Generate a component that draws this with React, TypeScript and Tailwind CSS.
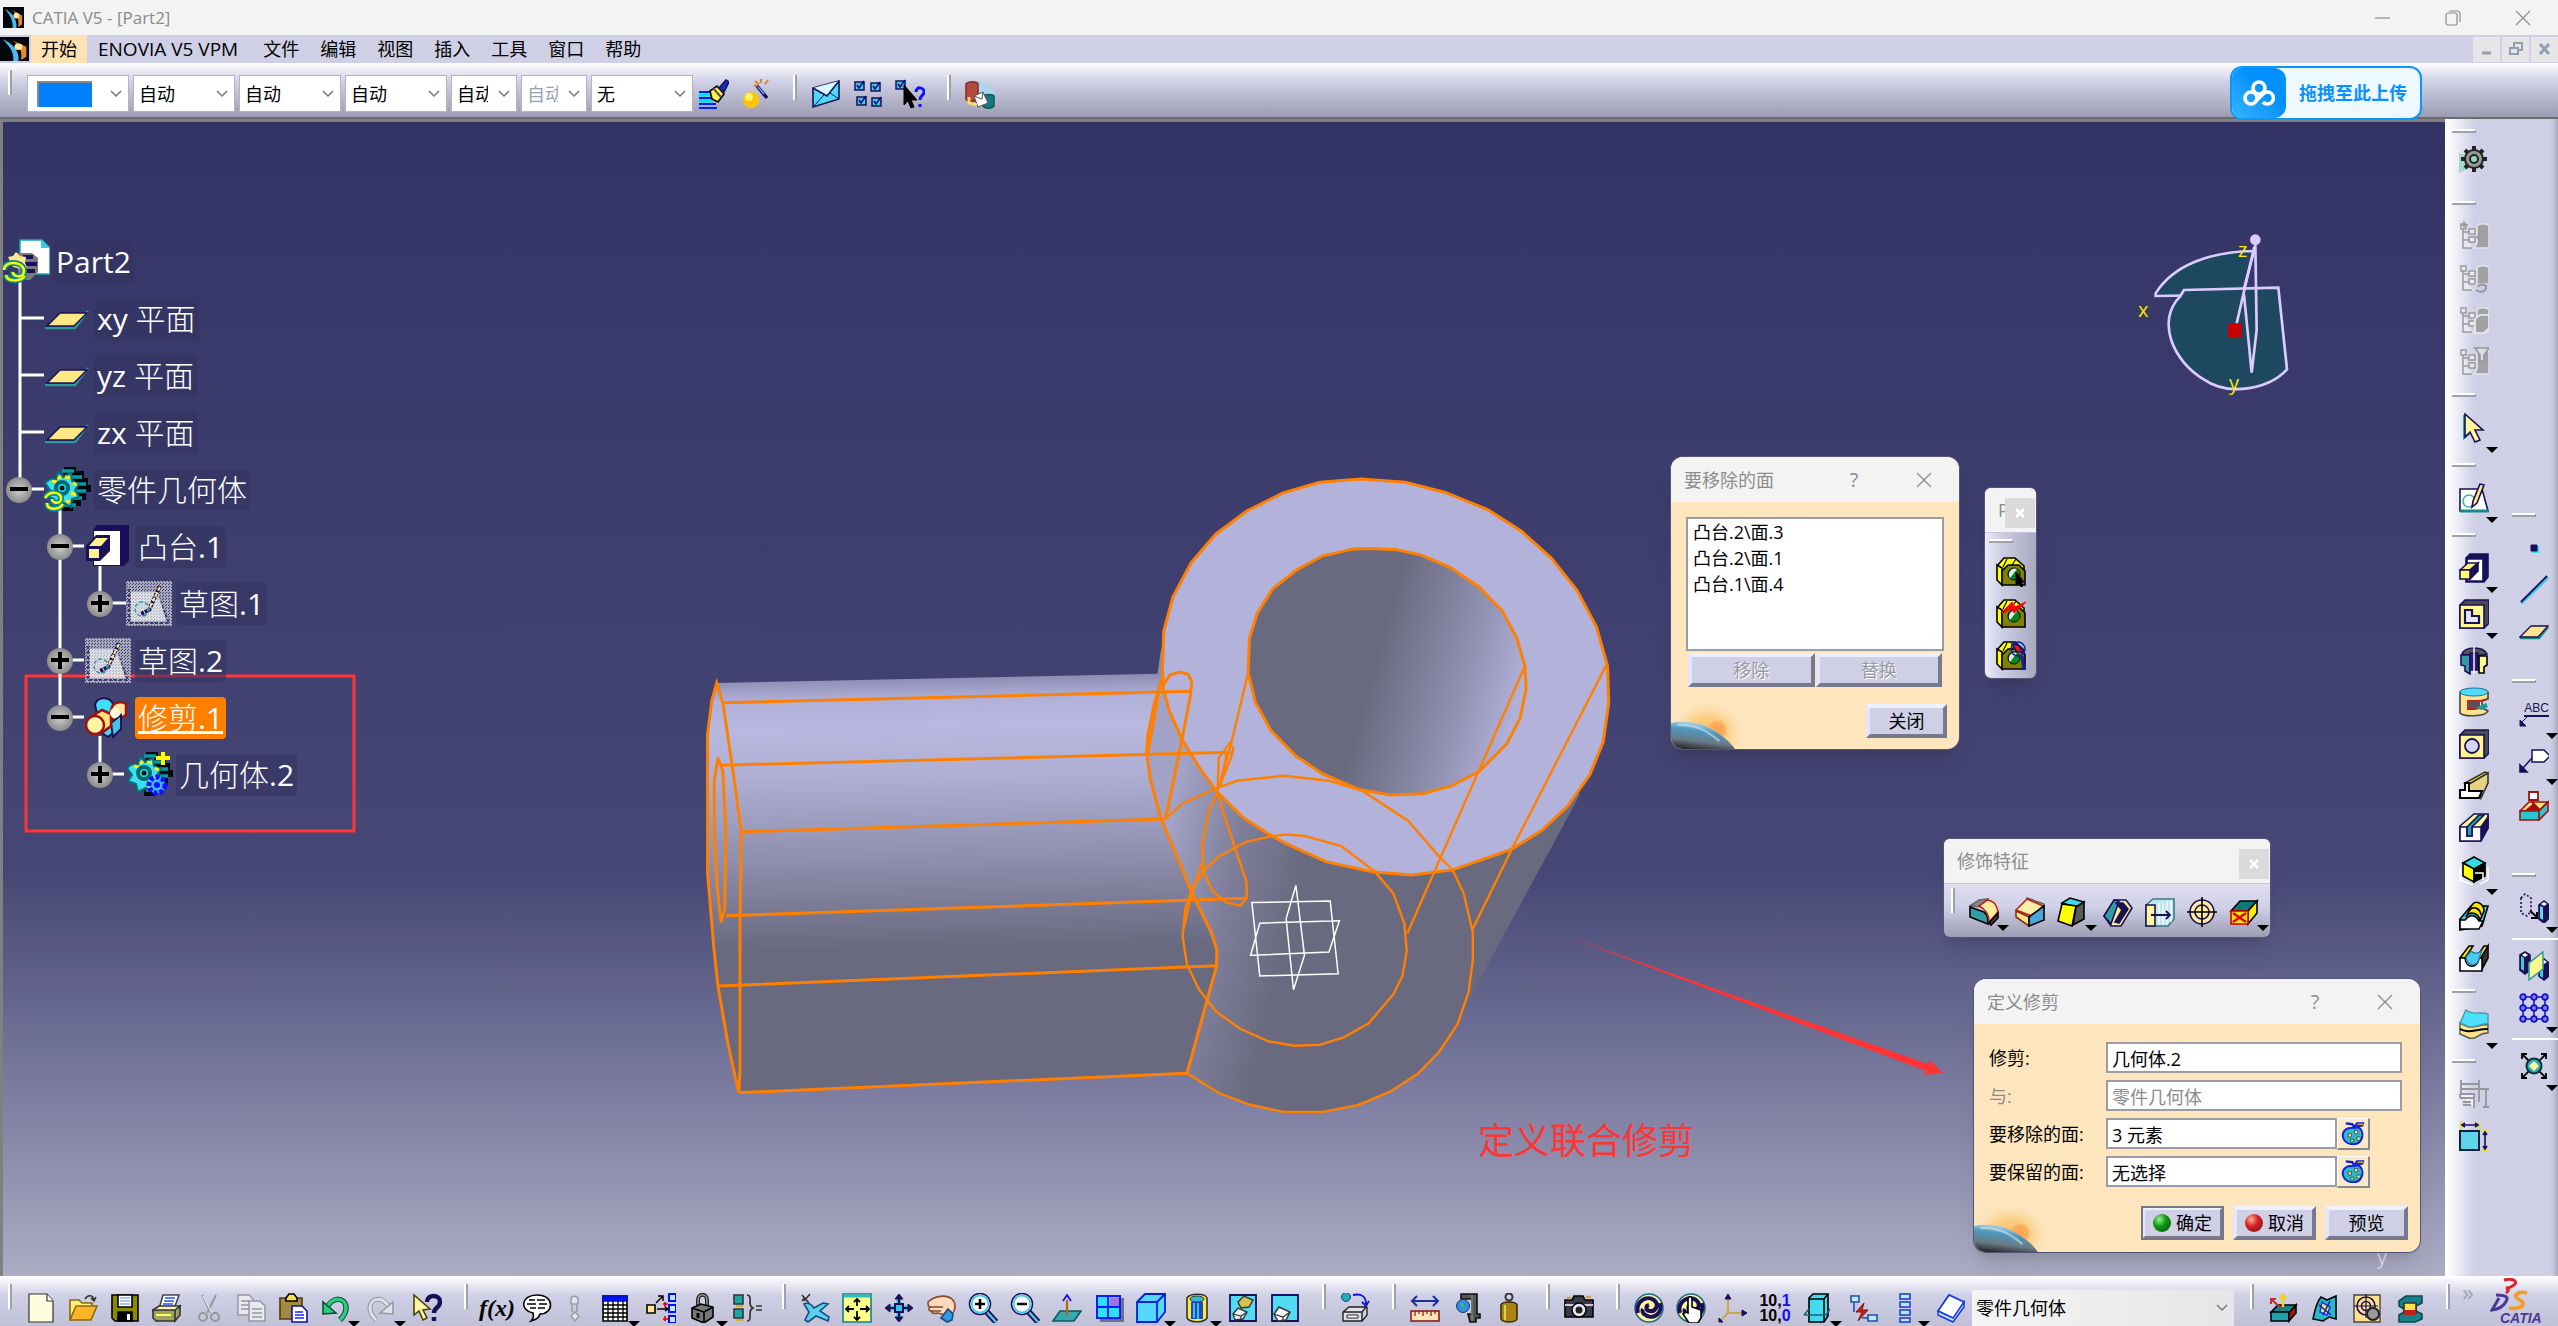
import * as React from "react";

const NAVY = "#1a1058";

function p(d: string, fill = "none", stroke = "#000", width = 1.6) {
  return <path d={d} fill={fill} stroke={stroke} strokeWidth={width} />;
}

const gear = (
  <>
    {p("M15 2v26M2 15h26M6 6l18 18M24 6L6 24", "none", "#222", 4)}
    <circle cx="15" cy="15" r="9" fill="#999" stroke="#222" strokeWidth="2" />
    <circle cx="15" cy="15" r="4" fill="#9bd3c4" stroke="#222" strokeWidth="2" />
  </>
);

const faceBlock = (
  <>
    {p("M1 9l7-8h11l9 8v4", "#ffff00")}
    {p("M7 10l4-8M16 8l4-6", "none", "#000", 1.2)}
    {p("M1 8v15l5 5V11z", "#ffff00")}
    {p("M6 28V14l6-6h11l6 6v14z", "#7f7f00")}
    <circle cx="18" cy="17" r="6" fill="#008a1c" stroke="#000" />
    {p("M14 21a6 6 0 0 1 7-9z", "#e6e6f5", "none")}
  </>
);

const disabledTree = (
  <>
    {p("M2 3h5v5H2zM10 8h6v5h-6zM10 16h6v5h-6zM4 8v19h9M4 11h6M4 19h6", "#e9e9f2", "#9a9a9e", 1.5)}
    {p("M18 5c2-3 10-3 12 0v22H15l3-5z", "#a2a2a6", "#e6e6ee", 1.5)}
  </>
);

const sheet = p("M3 1h18l6 7v21H3z", "#fffde0", "#333", 1.2);

const swirl = (
  <>
    <circle cx="15" cy="15" r="14" fill="#fff59a" stroke="#1d6f7c" strokeWidth="1.500" />
    {p("M4 20C1 8 13 2 20 7c6 5 1 12-4 11-4 0-5-5-1-6M26 10c3 11-8 18-16 11-1-1-2-3-1-5", "none", NAVY, 4)}
  </>
);

const magnifier = (
  <>
    {p("M18 18l10 11", "none", NAVY, 6)}
    {p("M18 18l10 11", "none", "#55c8e8", 2.5)}
    <circle cx="12" cy="11" r="10.500" fill="#fff" stroke={NAVY} strokeWidth="1.500" />
    <circle cx="12" cy="11" r="8.500" fill="#fff" stroke="#4ecbea" strokeWidth="2" />
  </>
);

const checks = (x: number, y: number) => (
  <>
    {p(`M${x} ${y}h9v8h-9z`, "#42c6e8", NAVY, 1.5)}
    {p(`M${x + 2} ${y + 3}l2 3 5-7`, "none", "#001070", 1.5)}
  </>
);

const icons: Record<string, React.ReactNode> = {
  brush: (
    <>
      {p("M0 13h13M0 19h15M0 25h17M0 29h18", "none", "#0020ff", 2)}
      {p("M0 16h12M0 22h14", "none", "#00e0f0", 3)}
      {p("M11 12l7-5 7 8-6 8-6-3z", "#ffec50")}
      {p("M14 9l8 9", "none", "#555", 2)}
      {p("M20 9l7-8 3 2-5 10z", "#1030c0", NAVY)}
    </>
  ),
  wand: (
    <>
      <circle cx="10" cy="21" r="8" fill="#ffc400" />
      <circle cx="8" cy="18" r="4" fill="#fff36b" />
      {p("M16 7l10 12", "none", NAVY, 3.5)}
      {p("M17 8l6 7", "none", "#70a0ff", 1.5)}
      {p("M14 2l4 3M20 0v4M27 1l-3 4M13 7l4-1", "none", "#e08030", 2)}
    </>
  ),
  envelope: (
    <>
      {p("M2 9l26-7v18L2 28z", "#4fd8f5", NAVY)}
      {p("M2 9l14 8L28 2", "#d8f8ff", NAVY)}
      {p("M2 28l11-12M28 20l-9-6", "none", NAVY, 1)}
    </>
  ),
  checkGrid: (
    <>
      {checks(2, 3)}
      {checks(18, 4)}
      {checks(4, 18)}
      {checks(19, 19)}
    </>
  ),
  whatSelect: (
    <>
      {checks(1, 2)}
      {p("M9 6v20l4-4 3 7 3-1-3-7h6z", "#000", "#000", 1)}
      {p("M21 13c0-6 8-5 8 0 0 4-4 3-4 8M25 25v3", "none", "#1010ff", 3)}
    </>
  ),
  database: (
    <>
      {p("M8 2c10-2 18 6 22 12v8L8 16z", "#abd6ef", "none")}
      {p("M1 5c2-3 11-3 12 0v15c-2 3-10 3-12 0z", "#b44a3c", "#8a3028")}
      {p("M18 17c2-2 10-2 11 0v10c-2 3-9 3-11 0z", "#127a80", "#0b5a60")}
      {p("M9 17l9-4 5 11-10 4z", "#fff", "#555", 1)}
      {p("M9 17l8 3 1-7", "none", "#555", 1)}
      {p("M4 18v6l8 2", "none", "#ffd76b", 3)}
    </>
  ),
  newFile: (
    <>
      {sheet}
      {p("M21 1v7h6", "#fff", "#333", 1.2)}
    </>
  ),
  open: (
    <>
      {p("M2 7h9l3 3h10v4H8L2 27z", "#fff07a", "#8a6a10")}
      {p("M2 27l6-14h21l-6 14z", "#ffb526", "#8a6a10")}
      {p("M17 6c3-5 8-4 9 1M23 5l3 3 2-4", "none", "#333")}
    </>
  ),
  save: (
    <>
      {p("M2 2h26v26H5l-3-3z", "#8a8a00")}
      {p("M8 2h14v12H8z", "#fff")}
      {p("M10 5h10M10 8h10M10 11h10", "none", "#5b8fe0", 1.2)}
      {p("M8 19h14v9H8z", "#000")}
      {p("M17 21h3v6h-3z", "#fff", "none")}
    </>
  ),
  print: (
    <>
      {p("M11 2h16l-5 14H7z", "#fff", "#444")}
      {p("M13 5h10M12 8h10M11 11h10", "none", "#2a50ff", 1.5)}
      {p("M1 17l6-4h21l-4 5H1z", "#f4f4c0", "#333")}
      {p("M1 17h22v11H4l-3-3zM23 17l5-4v9l-5 6z", "#9da35a", "#333")}
      {p("M4 22h15", "none", "#ffff60", 2)}
    </>
  ),
  cut: (
    <>
      {p("M8 2l9 18M22 2l-9 18", "none", "#96969c", 2)}
      {p("M9 3l9 17", "none", "#fff", 1)}
      <circle cx="9" cy="24" r="4" fill="none" stroke="#96969c" strokeWidth="2" />
      <circle cx="21" cy="24" r="4" fill="none" stroke="#96969c" strokeWidth="2" />
    </>
  ),
  copy: (
    <>
      {p("M2 2h11l4 4v16H2zM5 8h8M5 12h8M5 16h8", "#e9e9f2", "#96969c", 1.5)}
      {p("M13 8h11l5 5v15H13zM16 16h10M16 20h10M16 24h10", "#e9e9f2", "#96969c", 1.5)}
    </>
  ),
  paste: (
    <>
      {p("M2 5h22v21H2z", "#a08a40", "#4b3b10")}
      {p("M8 5l3-4h5l3 4v3H8z", "#ffe14a")}
      {p("M14 13h10l5 5v11H14z", "#fff", "#1010a0")}
      {p("M17 19h8M17 22h9M17 25h9", "none", "#2222ff", 1.5)}
    </>
  ),
  undo: (
    <>
      {p("M7 15C12 3 26 4 26 15c0 5-3 9-6 12", "none", "#0a4a4a", 5.5)}
      {p("M7 15C12 3 26 4 26 15c0 5-3 9-6 12", "none", "#28d07a", 3.5)}
      {p("M3 9v12l13-1z", "#28d07a", "#0a4a4a")}
    </>
  ),
  redo: (
    <>
      {p("M23 15C18 3 4 4 4 15c0 5 3 9 6 12", "none", "#9a9aa0", 5)}
      {p("M23 15C18 3 4 4 4 15c0 5 3 9 6 12", "none", "#dedeec", 3)}
      {p("M27 9v12l-13-1z", "#dedeec", "#9a9aa0")}
    </>
  ),
  help: (
    <>
      {p("M15 9c0-8 13-8 13 0 0 6-6 5-6 11M22 24v4", "none", NAVY, 4.5)}
      {p("M2 2v20l5-4 4 9 4-2-4-8 7-1z", "#fff6a0", "#4a4010")}
    </>
  ),
  bubble: (
    <>
      {p("M15 2c18 0 17 19 3 19-1 4-5 6-9 7 3-3 3-5 2-8C-3 17-1 2 15 2z", "#fff")}
      {p("M7 7h6M15 7h8M5 11h9M17 11h8M8 15h6M16 15h7", "none", "#000", 1.4)}
    </>
  ),
  chain: p("M11 11V7c0-5 7-5 7 0v4zM12 12v7M17 12v7M15 19l4 4-4 5-4-5z", "#e4e4f0", "#9c9ca4", 1.6),
  table: (
    <>
      {p("M3 3h24v25H3z", "#fff", "#000", 1.6)}
      {p("M3 3h24v5H3z", "#0010ff", "#0010c0")}
      {p("M3 12h24M3 16h24M3 20h24M3 24h24M8 8v20M13 8v20M18 8v20M23 8v20", "none", "#000", 1.3)}
    </>
  ),
  relations: (
    <>
      {p("M1 12h8v8H1z", "#ffe890")}
      {p("M23 1h7v7h-7zM23 12h7v7h-7zM23 23h7v7h-7z", "#bfe8ff", "#0010ff", 2)}
      {p("M11 16h10M10 10l7-7M19 14l3 2-3 2M17 8V3h-5", "none", "#000", 1.5)}
      {p("M17 11h5M19 9v5M17 26h5M19 23v5", "none", "#e00000", 1.6)}
    </>
  ),
  lock: (
    <>
      {p("M10 14V7c0-7 9-7 9 0v7", "none", "#222", 4)}
      {p("M10 14V7c0-7 9-7 9 0v7", "none", "#999", 1.5)}
      {p("M4 15l9-4 12 3v10l-9 6-12-5z", "#777")}
      {p("M4 15l12 4v11M16 19l9-5", "none", "#000")}
      {p("M10 20v5", "none", "#000", 3)}
    </>
  ),
  equation: (
    <>
      {p("M2 2h9v9H2zM2 16h9v9H2z", "#1ba5a0", "#333")}
      {p("M4 13h7M4 27h7", "none", "#d8b020", 2)}
      {p("M15 2c4 0 3 5 3 8s1 4 3 5c-2 1-3 2-3 5s1 8-3 8M24 13h6M24 17h6", "none", "#333", 1.7)}
    </>
  ),
  fly: (
    <>
      {p("M4 11c4-2 7 0 10 4l9-5 5 1-8 7 9 6-1 4-12-5-8 6-3-2 4-8z", "#56d2ef", "#1a4a80")}
      {p("M2 2l7 8M10 1L4 8M2 8l3-4", "none", "#333", 1.5)}
    </>
  ),
  fit: (
    <>
      {p("M1 1h28v28H1z", "#ffff8a", "#12808a")}
      {p("M1 3h28", "none", "#2ac0c0", 3)}
      {p("M15 7v6M15 18v8M5 16h7M18 16h8M12 9l3-3 3 3M12 24l3 3 3-3M7 13l-3 3 3 3M24 13l3 3-3 3", "none", "#000", 1.8)}
    </>
  ),
  pan: (
    <>
      {p("M15 4v22M4 15h22", "none", "#3ac0e0", 5)}
      {p("M15 2v26M2 15h26", "none", NAVY, 2)}
      {p("M11 6l4-5 4 5zM11 24l4 5 4-5zM6 11l-5 4 5 4zM24 11l5 4-5 4z", NAVY, NAVY, 1)}
      {p("M11 11h8v8h-8z", "#3ac0e0", NAVY, 2)}
    </>
  ),
  rotate: (
    <>
      {p("M2 9c6-6 18-8 24-3 5 5 3 12 0 15l-7 1-7-2c-4 1-7 0-6-2-4 0-4-3-1-4-3 0-3-2-3-5z", "#ffd9b8", "#8a4a30")}
      {p("M5 14h12M6 18h9", "none", "#8a4a30")}
      {p("M22 16l5 5-1 6-5 2-6-4z", "#2f9ce8", "#1a4a80")}
    </>
  ),
  zoomIn: (
    <>
      {magnifier}
      {p("M7 11h10M12 6v10", "none", "#000", 2.5)}
    </>
  ),
  zoomOut: (
    <>
      {magnifier}
      {p("M7 11h10", "none", "#000", 2.5)}
    </>
  ),
  normal: (
    <>
      {p("M1 28l7-10h21l-7 10z", "#35a8b0", "#0c5560")}
      {p("M15 22V7", "none", "#c06010", 2.2)}
      {p("M11 8l4-6 4 6", "none", "#1010e0", 1.8)}
    </>
  ),
  multiView: (
    <>
      {p("M6 5h24v24H6z", "#707088", "none")}
      {p("M3 3h23v22H3z", "#30e0ff", "#0020ff", 2)}
      {p("M14 3v22M3 14h23", "none", "#0020ff", 2)}
      {p("M16 5h9v8h-9z", "#a070e0", "none")}
    </>
  ),
  isoView: (
    <>
      {p("M1 9l8-8h20v18l-8 10H1z", "#55d8ff", "#0020e0", 1.8)}
      {p("M1 9h20l8-8M21 9v20", "none", "#0020e0", 1.8)}
    </>
  ),
  shading: (
    <>
      {p("M5 5c3-5 18-5 20 0v20c-3 5-17 5-20 0z", "#ffe93a", "#333")}
      {p("M9 9h12v17H9z", "#1a4ac0", "none")}
      {p("M12 10v15M16 10v16", "none", "#50e0f0", 1.5)}
      <ellipse cx="15" cy="6" rx="7" ry="3" fill="#30b8e0" stroke="#333" />
    </>
  ),
  hide: (
    <>
      {p("M2 2h26v26H2z", "#52dcf4", NAVY, 1.8)}
      {p("M10 9l6-6 9 4-4 7-8 1z", "#d8c050", "#333", 1.4)}
      {p("M5 21l5-6 9 4-4 7-8 1z", "#e8f0ff", "#333", 1.4)}
      {p("M5 21l8 2 6-4M13 23v3", "none", "#333", 1.2)}
    </>
  ),
  swap: (
    <>
      {p("M2 2h26v26H2z", "#52dcf4", NAVY, 1.8)}
      {p("M4 21l5-7 11 5-4 8-8 1z", "#f4f8ff", "#333", 1.4)}
      {p("M4 21l9 3 7-5M13 24v4", "none", "#333", 1.2)}
    </>
  ),
  material: (
    <>
      <circle cx="6" cy="4" r="4.500" fill="#28a8b8" stroke="#0c5560" />
      {p("M13 2c9-2 13 2 13 9M22 9l4 4 3-5", "none", "#1010e0", 1.8)}
      {p("M3 19l6-5h17l-4 5v9H3zM3 19h19M22 28l5-6v-8", "#e0e0ea", "#222", 1.4)}
      {p("M7 22h11v3H7z", "#fff", "#222", 1)}
    </>
  ),
  measure: (
    <>
      {p("M3 8h24M7 3L2 8l5 5M23 3l5 5-5 5", "none", "#1c2f9a", 2)}
      {p("M1 18h28v10H1z", "#ffe6b8", "#8a1010", 1.5)}
      {p("M5 18v5M9 18v3M13 18v5M17 18v3M21 18v5M25 18v3", "none", "#8a1010", 1.2)}
    </>
  ),
  caliper: (
    <>
      {p("M9 1h16v20h3v4h-4v4h-6l-2-8h4V6H9z", "#555", "#111")}
      {p("M20 2v26", "none", "#888", 1.5)}
      <circle cx="11" cy="13" r="6.500" fill="#3090e0" stroke="#1a3a70" />
      {p("M8 10l4 1-1 5z", "#40c060", "none")}
    </>
  ),
  weight: (
    <>
      <circle cx="15" cy="4" r="3.500" fill="none" stroke="#333" strokeWidth="2" />
      {p("M7 12c1-4 15-4 16 0v14c-2 4-14 4-16 0z", "#a88414", "#3a2c00")}
      {p("M11 12v15", "none", "#e8cc50", 2)}
    </>
  ),
  camera: (
    <>
      {p("M1 7h7l2-4h9l2 4h8v17H1z", "#3a3a4a")}
      {p("M1 12h28", "none", "#c8c8d8", 2)}
      {p("M3 5h4M22 4h5", "none", "#caa830", 2.5)}
      <circle cx="15" cy="17" r="7" fill="#e8e8f0" stroke="#000" strokeWidth="1.500" />
      <circle cx="15" cy="17" r="3.500" fill="#222" />
    </>
  ),
  update: swirl,
  manualUpdate: (
    <>
      {swirl}
      {p("M12 20V6c0-3 4-3 4 0v8l9 3v8l-3 5h-9l-6-9 3-2z", "#fff")}
    </>
  ),
  axis: (
    <>
      {p("M10 3v17h17M10 20L2 28", "none", "#c8a84a", 2.2)}
      {p("M7 6l3-5 3 5zM24 17l5 3-5 3zM1 25v4h4z", NAVY, NAVY, 1)}
    </>
  ),
  catalog: (
    <>
      {p("M7 5l4-4h15v22l-4 6H7z", "#40dcf0")}
      {p("M7 6h15l4-5M22 6v23", "none", "#000")}
      {p("M2 22l5-6M2 22h22l4-6", "none", "#186070", 1.5)}
    </>
  ),
  flash: (
    <>
      {p("M3 3h8v6H3zM20 22h9v6h-9z", "#bfeaf5", "#2050a8", 1.6)}
      {p("M6 9v10M14 25h6", "none", "#2050a8", 1.6)}
      {p("M16 10l-8 9h6l-4 9 10-11h-6z", "#d02020", "#801010", 1)}
    </>
  ),
  bodies: p("M10 1h10v5H10zM10 9h10v5H10zM10 17h10v5H10zM10 25h10v4H10z", "#b8e8f8", "#1838c8", 1.5),
  book: (
    <>
      {p("M2 18L13 2l15 7-10 17z", "#fff", "#1838e8", 1.8)}
      {p("M2 18v4l15 7 11-15V9L17 25zM2 18l15 7", "#bfe0ff", "#1838e8", 1.5)}
    </>
  ),
  extrudeAxis: (
    <>
      {p("M3 19l7-7h18l-7 8z", "#178088")}
      {p("M3 19h18v9H3z", "#20a0a8")}
      {p("M21 20l7-8v8l-7 8z", "#a01818")}
      {p("M15 14V3M12 6l3-4 3 4", "none", "#f0d020", 2.4)}
      {p("M13 15L4 7M3 11V6h5", "none", "#c03030", 2)}
    </>
  ),
  draftAnalysis: (
    <>
      {p("M3 26c2-9 3-16 8-22l6 3 9-4v23l-7-2-6 4z", "#28b8c8")}
      {p("M12 9l8 5-3 8-7-3z", "#ffe840", "#1838e8")}
      {p("M9 12l12 10M20 8l-7 14", "none", "#1020d0", 1.6)}
    </>
  ),
  tap: (
    <>
      {p("M2 2h26v27H2z", "#ffe08a", "#444", 1.4)}
      <circle cx="14" cy="13" r="9" fill="none" stroke={NAVY} strokeWidth="1.600" />
      <circle cx="14" cy="13" r="4.500" fill="none" stroke={NAVY} strokeWidth="1.600" />
      {p("M14 1v24M2 13h24", "none", NAVY, 1.2)}
      <circle cx="21" cy="21" r="6" fill="#999" stroke="#222" strokeWidth="2" />
    </>
  ),
  section: (
    <>
      {p("M5 8l7-5h16v7l-6 3v5l6 3v5l-7 3H5v-7l5-3v-3l-5-3z", "#178088", "#0b4a50")}
      {p("M10 10h12v10H10z", "#ffe640", "#333")}
      {p("M10 17h12v5H10z", "#c02020", "none")}
    </>
  ),
  workbench: (
    <>
      {p("M0 9v20l29-14z", "#a5d8c8", "none")}
      {gear}
    </>
  ),
  treeDown: (
    <>
      {disabledTree}
      {p("M5 0v8M1 4h8M22 12l-4 4 4 4", "none", "#96969c", 1.5)}
    </>
  ),
  treeRefresh: (
    <>
      {disabledTree}
      {p("M16 20h14v9H16z", "#cfcfe6", "none")}
      {p("M19 24c2-4 8-3 8 1M27 22v4M17 27c4 3 8 2 10-1", "none", "#96969c", 2)}
    </>
  ),
  treeBox: (
    <>
      {disabledTree}
      {p("M16 14l5-4h9v13l-5 5h-9z", "#a2a2a6", "#f0f0f6")}
    </>
  ),
  treeFilter: (
    <>
      {disabledTree}
      {p("M16 1h14l-5 7v6h-4V8z", "#dedeea", "#96969c")}
    </>
  ),
  select: (
    <>
      {p("M6 2v21l4-3", "none", "#28a8b0", 4)}
      {p("M6 1v23l5-5 5 10 5-2-5-10h8z", "#fff79a", NAVY)}
    </>
  ),
  sketcher: (
    <>
      {p("M1 6h22l6 22H1z", "#fff", NAVY)}
      {p("M1 28h29", "none", "#188890", 3)}
      <circle cx="10" cy="18" r="6" fill="none" stroke="#38b8a8" strokeWidth="1.600" />
      {p("M21 1l4 1-7 18-5 4 1-6z", "#ffe97a", NAVY)}
    </>
  ),
  pad: (
    <>
      {p("M7 5l4-4h18v23l-4 5H7z", NAVY, NAVY)}
      {p("M8 6h16v22H8z", "#fff", NAVY)}
      {p("M1 17l8-7h10l-8 7z", "#fff07a", NAVY)}
      {p("M11 17l8-7v8l-8 8z", NAVY, NAVY)}
      {p("M1 17h10v9H1z", "#ffff6a", NAVY)}
    </>
  ),
  pocket: (
    <>
      {p("M1 6l5-5h24v23l-5 5H1z", "#4a4a52", NAVY)}
      {p("M1 6h24v23H1z", "#fff792", NAVY)}
      {p("M6 11h7v6h7v7H6z", "#e6e6ff", NAVY, 2.2)}
    </>
  ),
  shaft: (
    <>
      {p("M3 9c3-8 21-8 25 0l-9 2h-8z", "#555", NAVY)}
      {p("M2 10h9v19l-5-3v-5l-4-1z", "#359aa4", NAVY)}
      {p("M11 8h8v17h-8z", "#2a1a7a", NAVY)}
      {p("M20 11h8v9l-3 2v6h-5z", "#fff792", "#000")}
      {p("M15 1v28", "none", "#fff", 1.4)}
    </>
  ),
  groove: (
    <>
      {p("M1 5c3-4 24-4 28 0v7l-6 2v7l6 3c-3 6-25 6-28 2z", "#ffe28a", "#444")}
      <ellipse cx="15" cy="5" rx="14" ry="4" fill="#50dcf8" stroke="#1878a0" />
      {p("M28 12l-7 2H9v8h7l12-3", "none", "#b02020", 1.8)}
      {p("M10 14h11v7H10z", "#555", "none")}
      {p("M17 21l10-5 2 4-7 3z", "#1898a0", "none")}
    </>
  ),
  hole: (
    <>
      {p("M1 6l5-5h24v23l-5 5H1z", "#4a4a52", NAVY)}
      {p("M1 6h24v23H1z", "#fff792", NAVY)}
      <circle cx="13" cy="17" r="7" fill="#d6d6f2" stroke={NAVY} strokeWidth="1.800" />
    </>
  ),
  rib: (
    <>
      {p("M10 13L29 2v10L22 27l-1-6H10z", "#e6d27e", "#333")}
      {p("M6 12L26 1l3 1L10 13z", "#fff200", "#333")}
      {p("M1 19h5v-7h4v8h13l-3 7H1z", "#fff", "#000", 2)}
    </>
  ),
  slotCut: (
    <>
      {p("M1 13L15 1h14v14l-8 13H1z", "#fff79a", NAVY)}
      {p("M22 14l7-10v11l-7 13z", NAVY, NAVY)}
      {p("M1 14h7v9h5v-9h9v14H1z", "#fff", NAVY)}
      {p("M8 14L20 2h5L13 14v9H8z", "#28a0a8", NAVY)}
    </>
  ),
  solidCombine: (
    <>
      {p("M4 8l11-6 11 6-11 6z", "#30dce8")}
      {p("M4 8v13l11 6V14z", "#ffff00")}
      {p("M15 14l11-6v13l-11 6z", "#000")}
      {p("M1 12v13l13 5M29 12v13l-8 4M16 18h8v7", "none", "#fff", 1.5)}
    </>
  ),
  loft: (
    <>
      {p("M1 18L12 5h17l-6 20-22 4z", "#3cc8e8")}
      {p("M7 16L13 4c4-6 12-1 12 6l-4 9c-2-8-11-9-14-3z", "#ffe600")}
      {p("M10 10c4-6 11-3 12 4", "none", "#000")}
      {p("M1 19h5c5-6 10-6 14 1h4l-4 8H1z", "#fff")}
    </>
  ),
  removedLoft: (
    <>
      {p("M1 15L10 3h4l-8 12zM17 15l8-12h4l-7 12z", "#ffe600")}
      {p("M22 15l7-12v12l-7 13z", "#333")}
      {p("M1 15h5c1 11 13 11 14 0h3v13H1z", "#fff")}
      {p("M7 14l5-6c3 3 8 3 11-1l-3 9c-2 8-12 8-13-2z", "#4cc8ec", "#1878a0", 1.2)}
    </>
  ),
  surface: (
    <>
      {p("M1 14l6 3c8 4 14-3 22-1v8c-9-1-12 8-19 5L1 25z", "#ffe48a", "#555", 1.4)}
      {p("M1 20c9 5 16 0 28 0", "none", "#000", 2)}
      {p("M1 14L7 1c8 6 14 1 22 4v10c-8-2-13 6-21 2z", "#4ce0fb", "#4a98a8", 1.4)}
    </>
  ),
  dimTable: (
    <>
      {p("M2 1v13M20 1v22M2 5h18M2 10h28M24 28h6M27 10v18", "none", "#96969c", 1.8)}
      {p("M1 15h14v14M1 19h14M4 23h8M4 26h8M1 15v4", "#f0f0f8", "#96969c", 1.8)}
    </>
  ),
  dimBox: (
    <>
      {p("M2 0v9M20 0v9M22 10h8M22 29h8", "none", "#e8d860", 2.4)}
      {p("M3 4h16M26 11v17M6 2L3 4l3 2M16 2l3 2-3 2M24 14l2-3 2 3M24 25l2 3 2-3", "none", NAVY, 1.6)}
      {p("M1 10h19v19H1z", "#5ed4e8", "#0c2040", 2)}
    </>
  ),
  point: (
    <>
      {p("M13 13h7v7h-7z", "#38d8f8", "none")}
      {p("M12 12h6v6h-6z", NAVY, NAVY, 1)}
    </>
  ),
  line: (
    <>
      {p("M2 28L29 2", "none", "#38c8f0", 3.6)}
      {p("M2 27L28 1", "none", NAVY, 1.8)}
    </>
  ),
  plane: (
    <>
      {p("M1 21h19l9-11", "none", "#188890", 2.6)}
      {p("M1 20L12 9h17l-10 11z", "#ffe48a", NAVY, 1.3)}
    </>
  ),
  flagNote: (
    <>
      {p("M13 5h12l6 6-6 6H13z", "#fff", NAVY, 1.5)}
      {p("M13 13L4 23", "none", NAVY, 1.5)}
      {p("M1 27v-7l7 7z", NAVY, NAVY)}
    </>
  ),
  stamp: (
    <>
      {p("M1 20l9-9h19l-9 9z", "#ffe070", "#a01010")}
      {p("M1 20h19v9H1zM20 20l9-9v9l-9 9z", "#28c8d0", "#a01010")}
      {p("M14 9v7M9 18h11l-5-5z", "#a01010", "#a01010", 1.8)}
      {p("M10 1h9v8h-9z", "#fff", "#a01010", 1.8)}
    </>
  ),
  translate: (
    <>
      <path d="M2 5l4-4 6 4v13l-4 5-6-3z" fill="none" stroke={NAVY} strokeWidth="1.600" strokeDasharray="2 2" />
      {p("M11 18l7 6M18 19v6h-6", "none", "#000", 2)}
      {p("M20 12l5-4 5 4v13l-5 5-5-4z", NAVY, NAVY)}
      {p("M21 13l3 1v13l-3-2z", "#60d8f0", "none")}
      {p("M22 11l3-2 3 2-3 2z", "#fff", "none")}
    </>
  ),
  mirror: (
    <>
      {p("M1 4l5-3 5 3v15l-5 4-5-4zM20 12l5-4 5 4v13l-5 4-5-4z", NAVY, NAVY)}
      {p("M2 5l3 2v13l-3-2zM21 13l3 2v12l-3-2z", "#40c8e0", "none")}
      {p("M3 4l3-2 3 2-3 2zM22 11l3-2 3 2-3 2z", "#fff", "none")}
      {p("M10 12L24 1v17L10 29z", "#fff792", "#38a098")}
    </>
  ),
  pattern: (
    <>
      {p("M3 4h24M3 15h24M3 26h24M4 3v24M15 3v24M26 3v24", "none", "#1010c8", 1.5)}
      {[4, 15, 26].map((x) =>
        [4, 15, 26].map((y) => (
          <circle key={`${x}-${y}`} cx={x} cy={y} r="2.800" fill="#8080ff" stroke="#1010c8" strokeWidth="1.800" />
        )),
      )}
    </>
  ),
  scale: (
    <>
      {p("M4 4l22 22M26 4L4 26M3 8V3h5M22 3h5v5M3 22v5h5M22 27h5v-5", "none", "#000", 1.8)}
      <circle cx="15" cy="15" r="7.500" fill="#28b0b8" stroke="#0c3038" strokeWidth="2" />
      {p("M15 10l5 5-5 5-5-5z", "#fff79a", "none")}
    </>
  ),
  faceSelect: (
    <>
      {faceBlock}
      {p("M20 15v13l3-2 2 4 2-1-2-4h3z", "#000", "#000", 1)}
    </>
  ),
  faceFlash: (
    <>
      {faceBlock}
      {p("M6 14L16 3l3 5L30 3 18 14l-2-4z", "#ff0000", "#ff0000", 1)}
    </>
  ),
  faceFind: (
    <>
      {faceBlock}
      {p("M16 3l6 1 6 8-8-2z", "#ff1010", "#101080")}
      <circle cx="22" cy="8" r="7" fill="none" stroke="#1020a0" strokeWidth="1.500" />
      {p("M26 15l2 14", "none", "#1020a0", 3)}
    </>
  ),
  fillet: (
    <>
      {p("M1 9l9-6 9-1-5 8z", "#8a8a8a", "#666")}
      {p("M1 10l14 5c4 3 4 7 4 12L1 20z", "#2f9ea6")}
      {p("M10 9l8-6c8 1 10 6 11 12l-9 10c0-7-2-12-10-16z", "#ffec9a", "#c02020")}
      {p("M20 26l9-10v5l-7 7z", "#444")}
    </>
  ),
  chamfer: (
    <>
      {p("M12 1l17 6v4L12 4z", "#999", "#666")}
      {p("M1 13L12 2l16 7-11 10z", "#fff0a8", "#c02020")}
      {p("M1 14l13 6v9L1 20z", "#ffe28a", "#8a3010")}
      {p("M14 29V20L29 9v14z", "#4ba6da")}
    </>
  ),
  draft: (
    <>
      {p("M5 6l8-5 14 4-8 5z", "#40d8ee")}
      {p("M5 7l14 2-4 20-14-5z", "#ffff00")}
      {p("M19 10l8-5v17l-11 6z", "#5a5a5a")}
    </>
  ),
  shell: (
    <>
      {p("M1 19L12 3h11l6 8-11 18H8z", "#ffe897", NAVY)}
      {p("M1 19L11 3l5 1-8 23z", "#2f9ea6", NAVY)}
      {p("M13 6h7l5 6-9 14-4-1 7-12z", NAVY, NAVY)}
    </>
  ),
  thickness: (
    <>
      {p("M1 8l7-6h21v20l-6 7H1z", "#bfe6ee", "#3a7a8a")}
      {p("M1 8h9v21H1z", "#fff7a0", NAVY)}
      {p("M14 6v22M18 6v22M26 3v22M22 4v23", "none", "#fff", 1.3)}
      {p("M6 18h19M21 14l4 4-4 4", "none", NAVY, 1.8)}
    </>
  ),
  target: (
    <>
      <circle cx="15" cy="15" r="12" fill="#ffeaa0" stroke={NAVY} strokeWidth="1.600" />
      <circle cx="15" cy="15" r="7" fill="none" stroke={NAVY} strokeWidth="1.600" />
      {p("M15 0v30M0 15h30", "none", "#000", 1.6)}
    </>
  ),
  removeFace: (
    <>
      {p("M2 14l9-10h17l-9 10z", "#0c7a78")}
      {p("M19 14l9-10v12l-9 11z", "#ffee00")}
      {p("M2 14h17v13H2z", "#ffe400", "#c00")}
      {p("M4 16l13 9M17 16L4 25", "none", "#e80000", 2.4)}
    </>
  ),
  bag: (
    <>
      {p("M9 9c-11 5-8 19 5 20S31 14 22 8z", "#2fb8c8", "#1020e0", 2.4)}
      {p("M6 3l8 1 3 4 3-5h9M20 7l8-2", "none", "#1020e0", 3)}
      {p("M21 4h7", "none", "#e0a020", 2)}
      {p("M9 16h4v4H9zM17 12h4v4h-4zM20 20h4v4h-4zM12 23h4v3h-4z", "#fff3b0", "#333", 1)}
    </>
  ),
};

function Icon({ name, className = "size-[30px]" }: { name: string; className?: string }) {
  return (
    <svg viewBox="0 0 30 30" className={className} aria-hidden="true">
      {icons[name]}
    </svg>
  );
}

function TextIcon({ name }: { name: string }) {
  if (name === "fx") return <span className="font-['Liberation_Serif',serif] text-2xl leading-[30px] font-bold italic">f(x)</span>;
  if (name === "decimals")
    return (
      <span className="flex flex-col font-['Liberation_Sans',sans-serif] text-base leading-[15px] font-bold">
        <span>
          10,<span className="text-[#1010ff]">1</span>
        </span>
        <span>
          10,<span className="text-[#1010ff]">0</span>
        </span>
      </span>
    );
  return (
    <span className="flex flex-col items-end font-['Liberation_Sans',sans-serif] text-xs leading-[13px] text-[#1a1058]">
      <span className="border-b-2 border-[#1a1058]">ABC</span>
      <svg viewBox="0 0 30 10" className="h-[10px] w-[30px]" aria-hidden="true">
        <path d="M8 0L3 5M1 3v6h6z" fill="#1a1058" stroke="#1a1058" />
      </svg>
    </span>
  );
}

const textIcons = ["fx", "decimals", "abc"];

type Tool = { icon: string; label: string; arrow?: boolean; tight?: boolean };

function DropArrow({ className }: { className: string }) {
  return (
    <svg viewBox="0 0 12 6" className={`absolute h-[6px] w-3 ${className}`} aria-hidden="true">
      <path d="M0 0h12L6 6z" fill="#000" />
    </svg>
  );
}

function toolSize(tool: Tool, vertical?: boolean) {
  if (vertical) return tool.arrow ? "h-[46px] w-[54px] pb-1" : "h-[42px] w-[54px]";
  if (tool.arrow) return "h-[38px] w-[46px] pr-1";
  return tool.tight ? "h-[38px] w-[38px]" : "h-[38px] w-[42px]";
}

function ToolButton({ tool, vertical }: { tool: Tool; vertical?: boolean }) {
  return (
    <button
      type="button"
      aria-label={tool.label}
      className={`relative flex shrink-0 items-center justify-center ${toolSize(tool, vertical)}`}
    >
      {textIcons.includes(tool.icon) ? <TextIcon name={tool.icon} /> : <Icon name={tool.icon} />}
      {tool.arrow && <DropArrow className={vertical ? "right-[3px] bottom-0" : "right-0 bottom-0"} />}
    </button>
  );
}

function Grip({ vertical }: { vertical?: boolean }) {
  return vertical ? (
    <div className="flex h-6 shrink-0 items-center pl-[5px]">
      <div className="h-[4px] w-6 border-t-2 border-r border-b-2 border-t-white border-r-[#8c8c98] border-b-[#a0a0a8]" />
    </div>
  ) : (
    <div className="w-7 shrink-0 pl-4">
      <div className="h-[25px] w-[4px] border-r-2 border-l-2 border-r-[#a0a0a8] border-l-white" />
    </div>
  );
}

function Chevron() {
  return (
    <svg viewBox="0 0 12 8" className="pointer-events-none absolute top-1/2 right-[6px] h-2 w-3 -translate-y-1/2" aria-hidden="true">
      <path d="M1 1l5 5 5-5" fill="none" stroke="#777" strokeWidth="1.500" />
    </svg>
  );
}

function Combo({ label, value, width, disabled }: { label: string; value: string; width: string; disabled?: boolean }) {
  return (
    <div className={`relative h-[37px] shrink-0 border border-[#b4b4bc] bg-white ${width}`}>
      <select
        aria-label={label}
        disabled={disabled}
        className="h-full w-full appearance-none bg-transparent pr-7 pl-[5px] text-lg leading-[34px] text-black outline-none disabled:text-gray-400"
      >
        <option>{value}</option>
      </select>
      <Chevron />
    </div>
  );
}

const menus = ["开始", "ENOVIA V5 VPM", "文件", "编辑", "视图", "插入", "工具", "窗口", "帮助"];

function AppLogo({ className }: { className: string }) {
  return (
    <svg viewBox="0 0 22 22" preserveAspectRatio="none" className={className} aria-hidden="true">
      <rect width="22" height="22" fill="#05070f" />
      <path d="M2 2c8 4 13 11 12 20h-4C11 14 7 8 2 2z" fill="#4bb8f0" />
      <path d="M9 3c6 4 8 10 7 18l4-3V9z" fill="#e08a30" />
      <circle cx="14" cy="9" r="3" fill="#ffe7a0" />
    </svg>
  );
}

function TitleBar() {
  return (
    <header className="flex h-[35px] shrink-0 items-center bg-[#f3f3f3] pl-[3px] text-[#8b8b8b]">
      <AppLogo className="size-[21px]" />
      <h1 className="ml-2 flex-1 text-[17px]">CATIA V5 - [Part2]</h1>
      {[
        ["最小化", "M0 8h15"],
        ["还原", "M1 5c0-1 1-2 2-2h7c1 0 2 1 2 2v8c0 1-1 2-2 2H3c-1 0-2-1-2-2zM4 1h8c2 0 3 1 3 3v8"],
        ["关闭", "M1 1l14 14M15 1L1 15"],
      ].map(([label, d]) => (
        <button key={label} type="button" aria-label={label} className="flex h-full w-[70px] items-center justify-center">
          <svg viewBox="0 0 16 16" className="size-4" aria-hidden="true">
            <path d={d} fill="none" stroke="currentColor" strokeWidth="1.200" />
          </svg>
        </button>
      ))}
    </header>
  );
}

function MenuBar() {
  return (
    <nav className="flex h-7 shrink-0 items-center bg-[#cfcfe6]">
      <AppLogo className="mr-[2px] h-6 w-[29px]" />
      <div className="flex flex-1 gap-px">
        {menus.map((m, i) => (
          <button
            key={m}
            type="button"
            className={`h-7 px-[10px] leading-7 whitespace-nowrap ${i === 0 ? "bg-[#ffe2b4]" : ""} ${i === 1 ? "pr-[14px] text-[19px]" : "text-lg"}`}
          >
            {m}
          </button>
        ))}
      </div>
      <div className="flex gap-[2px]">
        {[
          ["最小化文档", "M3 12h9", 3],
          ["还原文档", "M2 7h8v6H2zM6 6V2h8v7h-3", 2],
          ["关闭文档", "M3 3l9 10M12 3L3 13", 3],
        ].map(([label, d, w]) => (
          <button key={label} type="button" aria-label={String(label)} className="flex h-[25px] w-[27px] items-center justify-center bg-[#e6e6e8]">
            <svg viewBox="0 0 16 16" className="size-4" aria-hidden="true">
              <path d={String(d)} fill="none" stroke="#92a0ae" strokeWidth={w} />
            </svg>
          </button>
        ))}
      </div>
    </nav>
  );
}

function UploadBadge() {
  return (
    <button
      type="button"
      className="absolute top-[3px] right-[136px] z-20 flex h-[54px] w-48 items-center overflow-hidden rounded-xl border-2 border-[#0a98ff] bg-[#eef8ff] text-lg font-bold text-[#0a90ff]"
    >
      <span className="flex h-full w-[54px] items-center justify-center rounded-r-xl bg-linear-to-tr from-[#35b4ff] to-[#0090ff] to-60%">
        <svg viewBox="0 0 32 26" className="h-[26px] w-8" aria-hidden="true">
          <g fill="none" stroke="#fff" strokeWidth="3.600">
            <circle cx="16" cy="8" r="6" />
            <circle cx="8" cy="18" r="6" />
            <path d="M12 22l8-8a6 6 0 1 1 0 8" />
          </g>
        </svg>
      </span>
      <span className="flex-1 whitespace-nowrap">拖拽至此上传</span>
    </button>
  );
}

function GraphicToolbar() {
  return (
    <div className="relative flex h-14 shrink-0 border-b-2 border-[#6c6c6c] bg-linear-to-b from-white via-[#cfcfe6] via-35% to-[#9c9cb2]">
      <div className="flex items-start pt-[12px]">
        <div className="-mt-[5px] -ml-2 flex">
          <Grip />
        </div>
        <div className="ml-[7px] flex items-start gap-1">
          <div className="relative flex h-[37px] w-[102px] items-center border border-[#b4b4bc] bg-white pl-[9px]">
            <button type="button" aria-label="颜色" className="h-[26px] w-[55px] border-t-2 border-l-2 border-[#888] bg-[#0080ff]" />
            <Chevron />
          </div>
          <Combo label="透明度" value="自动" width="w-[102px]" />
          <Combo label="线宽" value="自动" width="w-[102px]" />
          <Combo label="线型" value="自动" width="w-[102px]" />
          <Combo label="点符号" value="自动" width="w-[66px]" />
          <Combo label="渲染样式" value="自动" width="w-[66px]" disabled />
          <Combo label="图层" value="无" width="w-[102px]" />
        </div>
        <div className="flex">
          <ToolButton tool={{ icon: "brush", label: "格式刷" }} />
          <ToolButton tool={{ icon: "wand", label: "向导" }} />
          <Grip />
          <ToolButton tool={{ icon: "envelope", label: "发送" }} />
          <ToolButton tool={{ icon: "checkGrid", label: "全部检查" }} />
          <ToolButton tool={{ icon: "whatSelect", label: "检查所选" }} />
          <Grip />
          <ToolButton tool={{ icon: "database", label: "数据库" }} />
        </div>
      </div>
      <UploadBadge />
    </div>
  );
}

type TreeItem = { text: string; level: number; icon: "part" | "plane" | "body" | "pad" | "sketch" | "trim" | "bodyAdd"; node?: "+" | "-"; active?: boolean };

const tree: TreeItem[] = [
  { text: "Part2", level: 0, icon: "part" },
  { text: "xy 平面", level: 1, icon: "plane" },
  { text: "yz 平面", level: 1, icon: "plane" },
  { text: "zx 平面", level: 1, icon: "plane" },
  { text: "零件几何体", level: 1, icon: "body", node: "-" },
  { text: "凸台.1", level: 2, icon: "pad", node: "-" },
  { text: "草图.1", level: 3, icon: "sketch", node: "+" },
  { text: "草图.2", level: 2, icon: "sketch", node: "+" },
  { text: "修剪.1", level: 2, icon: "trim", node: "-", active: true },
  { text: "几何体.2", level: 3, icon: "bodyAdd", node: "+" },
];

const bodyIcon = (
  <>
    <path d="M20 0h12v4h8v7h4v7h3v7h-5v8h-5v6h-8v5H18z" fill="#05070f" />
    <path d="M18 4h12M24 10h14M24 17h18M24 24h18M24 31h14M20 38h12" stroke="#00a0a4" strokeWidth="3.500" />
    <path d="M6 12l6 1 2-8 5 5 8-4 1 8 7 3-4 6 4 7-7 2-1 8-7-4-8 4-2-8-8-3 4-6-5-7z" fill="#3ae0f0" stroke="#087078" strokeWidth="2" />
    <path d="M8 14l5 1M21 10l5 1M29 16l4 2M27 26l5 2M22 34l4 1M14 12l3-3" stroke="#fff000" strokeWidth="3" />
    <circle cx="18" cy="21" r="6" fill="#1de0e8" stroke="#056a70" strokeWidth="4" />
    <circle cx="18" cy="21" r="2.500" fill="#111" />
  </>
);

const swirlIcon = (
  <>
    <path d="M1 31c5-8 17-6 16 1 0 5-9 5-9 0M19 37c-5 7-16 6-16-1" fill="none" stroke="#0a8a90" strokeWidth="6" />
    <path d="M1 31c5-8 17-6 16 1 0 5-9 5-9 0M19 37c-5 7-16 6-16-1" fill="none" stroke="#ffff00" strokeWidth="2.500" />
  </>
);

const treeIcons: Record<TreeItem["icon"], React.ReactNode> = {
  part: (
    <>
      <path d="M17 1h22l8 8v26H17z" fill="#fff" stroke="#18a8b8" strokeWidth="1.500" />
      <path d="M38 1v8h9z" fill="#38d0e0" />
      <path d="M13 14h16l6 5v14l-8 8H16z" fill="#7a7a80" />
      <path d="M20 18h10M20 25h14M20 32h12" stroke={NAVY} strokeWidth="4" />
      <path d="M5 18l5-1 3-4 4 4 6 1-1 6 2 4-6 2-8-2z" fill="#ffe88a" />
      <path d="M1 31c0-10 20-9 20 1 0 8-12 6-11 1M22 37c-5 6-18 6-19-1" fill="none" stroke="#0a8a90" strokeWidth="6" />
      <path d="M1 31c0-10 20-9 20 1 0 8-12 6-11 1M22 37c-5 6-18 6-19-1" fill="none" stroke="#ffff00" strokeWidth="2.500" />
    </>
  ),
  plane: (
    <>
      <path d="M1 32h30l13-17" fill="none" stroke="#2c9a9c" strokeWidth="2.500" />
      <path d="M3 30l13-13h27L30 30z" fill="#ffe884" stroke={NAVY} strokeWidth="1.500" />
    </>
  ),
  body: (
    <>
      {bodyIcon}
      {swirlIcon}
    </>
  ),
  pad: (
    <>
      <path d="M8 6l4-5h32v36l-5 5H8z" fill={NAVY} />
      <path d="M9 7h26v34H9z" fill="#fff" />
      <path d="M1 22l10-11h14v16L15 37H1z" fill={NAVY} />
      <path d="M4 22l7-8h12l-7 8zM4 25h10v9H4z" fill="#fff48a" />
    </>
  ),
  sketch: (
    <>
      <defs>
        <pattern id="dither" width="3" height="3" patternUnits="userSpaceOnUse">
          <rect width="3" height="3" fill="#d4d4dc" />
          <rect width="1" height="1" fill="#3c3c6c" />
          <rect x="1" y="2" width="1" height="1" fill="#3c3c6c" />
        </pattern>
      </defs>
      <rect width="46" height="45" fill="url(#dither)" opacity="0.700" />
      <path d="M3 8v34h40L32 14" fill="none" stroke="#3c3c6c" strokeWidth="2" strokeDasharray="3 2" />
      <path d="M5 11h27l8 29H5z" fill="#fff" opacity="0.600" />
      <path d="M34 5L23 29l-8 4" fill="none" stroke={NAVY} strokeWidth="4" strokeDasharray="3 1" />
      <path d="M34 6L23 28" fill="none" stroke="#fff08a" strokeWidth="2" strokeDasharray="4 2" />
      <circle cx="16" cy="28" r="7" fill="none" stroke="#2c9a9c" strokeWidth="1.500" strokeDasharray="4 2" />
    </>
  ),
  trim: (
    <>
      <path d="M10 10c2-9 13-8 17-3l4 8v20l-8 7-6-4z" fill="#40dcf8" stroke={NAVY} strokeWidth="2" />
      <path d="M27 12c2-5 10-6 14-3v11l-10 6-7-4z" fill="#ffe8a0" stroke="#a01010" strokeWidth="2.500" />
      <path d="M26 28l10-8v14l-8 8z" fill="#40c8e8" stroke={NAVY} strokeWidth="2" />
      <path d="M9 20l8-5 9 4v12l-8 6z" fill="#ffe27a" stroke="#a01010" strokeWidth="2.500" />
      <circle cx="10" cy="30" r="9" fill="#fff6a0" stroke="#a01010" strokeWidth="2.500" />
      <circle cx="30" cy="18" r="5" fill="#fffbe0" />
    </>
  ),
  bodyAdd: (
    <>
      {bodyIcon}
      <path d="M37 0v13M30 6h14" stroke="#ffff00" strokeWidth="4" />
      <circle cx="31" cy="33" r="8" fill="#40b8ff" stroke="#1010ff" strokeWidth="5" strokeDasharray="4 2" />
      <circle cx="31" cy="33" r="3" fill="#1010ff" />
    </>
  ),
};

const treeIndent = ["pl-[3px]", "pl-[44px]", "pl-[85px]", "pl-[126px]"];
const nodeIndent = ["left-0", "left-[6px]", "left-[47px]", "left-[87px]"];

function SpecTree() {
  return (
    <div className="absolute top-[114px] left-0">
      <svg viewBox="0 0 360 570" className="absolute top-0 left-0 h-[570px] w-[360px]" aria-hidden="true">
        <path
          d="M20 45v211M20 85h24M20 142h24M20 199h24M20 256h24M60 275v210M60 313h24M100 332v34M100 370h26M60 427h24M60 484h24M100 503v34M100 541h24"
          fill="none"
          stroke="#fff"
          strokeWidth="3"
        />
      </svg>
      <ul>
        {tree.map((item) => (
          <li key={item.text} className={`relative flex h-[57px] items-center ${treeIndent[item.level]}`}>
            {item.node && (
              <button
                type="button"
                aria-label={item.node === "-" ? "折叠" : "展开"}
                className={`absolute size-[26px] rounded-full bg-radial from-[#d0d0d0] to-[#707070] ${nodeIndent[item.level]}`}
              >
                <svg viewBox="0 0 26 26" aria-hidden="true">
                  <path d={item.node === "-" ? "M4 12h18" : "M4 12h18M13 4v17"} stroke="#000" strokeWidth="4" />
                </svg>
              </button>
            )}
            <svg viewBox="0 0 47 45" className="relative h-[45px] w-[47px]" aria-hidden="true">
              {treeIcons[item.icon]}
            </svg>
            <span
              className={`relative ml-[3px] rounded-sm px-[3px] text-3xl leading-[42px] whitespace-nowrap text-white ${
                item.active ? "bg-[#ff8000] underline" : "bg-[#33336199]"
              }`}
            >
              {item.text.split(/([\u4e00-\u9fa5]+)/).map((run, i) => (
                <span key={i} className={i % 2 ? "font-light" : ""}>
                  {run}
                </span>
              ))}
            </span>
          </li>
        ))}
      </ul>
    </div>
  );
}

const ringFace =
  "M1112 83L1185 90 1250 112 1320 150 1375 197 1423 255 1465 325 1497 405 1515 490 1517 570 1508 655 1486 727 1450 795 1408 848 1357 890 1262 934 1195 945 1130 938 1055 916 990 877 960 855 920 820 878 765 850 715 820 650 800 590 790 545 788 500 790 415 805 340 835 265 875 203 925 153 985 113 1045 90z";
const bore =
  "M1130 234L1170 237 1210 248 1258 275 1305 318 1343 370 1367 430 1380 490 1382 540 1372 605 1350 660 1305 720 1260 751 1213 768 1160 771 1110 759 1050 725 1005 685 965 630 940 570 928 505 930 430 943 375 968 322 1008 280 1050 250 1100 235z";

const edges = [
  "M60 527L52 565 45 640 45 940 55 1100 62 1187 78 1310 96 1420 98 1370 98 1050 100 850 85 705 70 570z",
  "M62 690L56 740 56 850 60 960 67 1048 73 1020 75 850 70 720z",
  "M70 570L835 545M68 706L900 678M100 851L793 823M75 1034L925 996M62 1187L875 1143M98 1419L828 1377",
  "M788 515L775 570 764 640 762 680 768 735 785 820 810 900 838 990 868 1070 877 1110 876 1145 828 1377",
  "M790 530L800 510 815 503 830 508 836 525 833 560 820 650 793 823",
  "M785 525L764 680",
];

const thinEdges = [
  "M793 823L820 790 878 755 910 740 985 729 1060 740 1115 762 1190 828 1240 905 1262 934 1280 985 1295 1070 1295 1130 1288 1200 1270 1270 1240 1330 1205 1378 1160 1417 1108 1446 1050 1461 985 1461 930 1445 880 1420 828 1377",
  "M878 765L865 800 853 875 855 940 870 980 892 1005 915 1012 926 995 925 960 905 880 885 800z",
  "M878 765L880 690 898 658 904 670 900 690 880 755M928 505L900 660 880 755M884 735L892 690 890 675",
  "M1380 490L1243 905 1188 1072M1513 488L1360 885 1294 1065",
  "M990 857L1020 860 1080 882 1135 938 1165 985 1183 1050 1187 1110 1180 1165 1165 1205 1125 1268 1085 1298 1045 1315 1003 1317 960 1307 915 1280 875 1242 848 1195 828 1140 821 1080 825 1020 838 970 860 930 880 905 925 873 965 861z",
  "M852 920L833 1000 823 1060",
];

function Model() {
  return (
    <svg x="680" y="441" width="960" height="720" viewBox="0 0 1568 1568" preserveAspectRatio="none">
      <defs>
        <linearGradient id="barrel" gradientUnits="userSpaceOnUse" x1="400" y1="515" x2="410" y2="1105">
          <stop offset="0" stopColor="#8c8cb4" />
          <stop offset="0.080" stopColor="#b0b0d8" />
          <stop offset="0.180" stopColor="#b8b8e0" />
          <stop offset="0.350" stopColor="#b0b0d6" />
          <stop offset="0.650" stopColor="#9090b0" />
          <stop offset="1" stopColor="#69697f" />
        </linearGradient>
        <linearGradient id="boss" gradientUnits="userSpaceOnUse" x1="780" y1="950" x2="1010" y2="990">
          <stop offset="0" stopColor="#a2a2c6" />
          <stop offset="0.500" stopColor="#7e7e9a" />
          <stop offset="1" stopColor="#69697f" />
        </linearGradient>
        <linearGradient id="boreShade" gradientUnits="userSpaceOnUse" x1="1130" y1="500" x2="1370" y2="550">
          <stop offset="0" stopColor="#69697f" />
          <stop offset="0.600" stopColor="#8f8fb0" />
          <stop offset="1" stopColor="#b0b0d8" />
        </linearGradient>
      </defs>
      <path d="M60 527L780 507 786 450 878 765 885 1140 828 1377 96 1420 80 1310 62 1187 46 940 45 640 52 565z" fill="url(#barrel)" />
      <path
        d="M790 530L765 640 766 720 785 820 838 990 877 1110 876 1145 828 1377 880 1420 930 1445 985 1461 1050 1461 1108 1446 1160 1417 1205 1378 1240 1330 1270 1270 1295 1200 1470 770 1200 700 900 750z"
        fill="url(#boss)"
      />
      <path d={ringFace} fill="#b2b2da" />
      <path d={bore} fill="url(#boreShade)" />
      <g fill="none" stroke="#ff8000" strokeWidth="3">
        {[...edges, ringFace, bore].map((d) => (
          <path key={d} d={d} vectorEffect="non-scaling-stroke" />
        ))}
      </g>
      <g fill="none" stroke="#ff8000" strokeWidth="2.400">
        {thinEdges.map((d) => (
          <path key={d} d={d} vectorEffect="non-scaling-stroke" />
        ))}
      </g>
      <path
        d="M934 1005L1062 1002 1075 1160 947 1165zM947 1050L1077 1045 1060 1113 932 1120zM1006 968L990 1040 1002 1195 1020 1120z"
        fill="none"
        stroke="#fff"
        strokeWidth="1.500"
        vectorEffect="non-scaling-stroke"
      />
    </svg>
  );
}

function Compass() {
  return (
    <svg x="2100" y="0" width="458" height="420" viewBox="0 0 1374 1260">
      <g fill="#1d4860" stroke="#dccbff" strokeWidth="8">
        <path d="M462 753C330 755 220 795 167 880v8l260-4z" />
        <path d="M252 870l283-7 26 245c-50 55-170 85-250 30C215 1080 170 960 240 890z" />
        <path d="M463 740l-53 230M466 735l4 255-15 128-23-235" fill="none" />
      </g>
      <circle cx="466" cy="719" r="16" fill="#dccbff" />
      <rect x="384" y="970" width="41" height="41" fill="#c80000" />
      <g className="fill-[#ffe600] font-['Open_Sans',sans-serif] text-[60px]">
        <text x="414" y="771">
          z
        </text>
        <text x="114" y="951">
          x
        </text>
        <text x="387" y="1171">
          y
        </text>
      </g>
    </svg>
  );
}

function Scene() {
  return (
    <svg viewBox="0 119 2445 1157" className="absolute inset-0 h-full w-full" aria-hidden="true">
      <Model />
      <Compass />
      <rect x="26" y="676" width="328" height="155" fill="none" stroke="#ff3434" strokeWidth="3" />
      <path d="M1566 936L1928 1064 1930 1060 1943 1073 1924 1075 1926 1071z" fill="#ff3434" />
      <text x="1478" y="1154" className="fill-[#ff3434] text-4xl">
        定义联合修剪
      </text>
      <text x="2377" y="1264" className="fill-[#e0e0ee] text-xl">
        y
      </text>
    </svg>
  );
}

function Planet() {
  const id = React.useId();
  return (
    <svg viewBox="0 0 240 150" className="pointer-events-none absolute bottom-0 left-0 h-[50px] w-20" aria-hidden="true">
      <defs>
        <radialGradient id={`${id}-glow`}>
          <stop offset="0" stopColor="#f9bf5e" />
          <stop offset="0.500" stopColor="#fad086" />
          <stop offset="1" stopColor="#fde5be" stopOpacity="0" />
        </radialGradient>
        <radialGradient id={`${id}-sun`}>
          <stop offset="0" stopColor="#fba050" />
          <stop offset="0.700" stopColor="#fbac5c" />
          <stop offset="1" stopColor="#fbac5c" stopOpacity="0" />
        </radialGradient>
        <linearGradient id={`${id}-globe`} x1="0.600" y1="0" x2="0.300" y2="1">
          <stop offset="0" stopColor="#cfe6ee" />
          <stop offset="0.350" stopColor="#4c98be" />
          <stop offset="0.700" stopColor="#6a7a84" />
          <stop offset="1" stopColor="#2c2a2e" />
        </linearGradient>
      </defs>
      <ellipse cx="110" cy="100" rx="120" ry="98" fill={`url(#${id}-glow)`} />
      <circle cx="138" cy="94" r="32" fill={`url(#${id}-sun)`} />
      <path d="M0 72c40-8 90-2 120 18 35 20 55 36 72 60H0z" fill={`url(#${id}-globe)`} />
      <path d="M20 78c50-2 85 14 125 48" fill="none" stroke="#e4f2f8" strokeWidth="7" opacity="0.500" />
    </svg>
  );
}

function Dialog({ title, className, children }: { title: string; className: string; children: React.ReactNode }) {
  return (
    <section aria-label={title} className={`absolute overflow-hidden rounded-xl bg-[#fde5be] shadow-xl ring-1 ring-[#55557a] ${className}`}>
      <div className="flex h-[45px] items-center bg-[#f3f3f3] pl-[13px] text-lg text-[#8c8c8c]">
        <h2 className="flex-1">{title}</h2>
        <button type="button" aria-label="帮助" className="w-[70px] text-xl">
          ?
        </button>
        <button type="button" aria-label="关闭窗口" className="flex w-[70px] justify-center">
          <svg viewBox="0 0 16 16" className="size-4" aria-hidden="true">
            <path d="M1 1l14 14M15 1L1 15" stroke="#8c8c8c" strokeWidth="1.300" />
          </svg>
        </button>
      </div>
      {children}
      <Planet />
    </section>
  );
}

function BevelButton({ children, className, disabled }: { children: React.ReactNode; className: string; disabled?: boolean }) {
  return (
    <button
      type="button"
      disabled={disabled}
      className={`flex h-[34px] items-center justify-center gap-[5px] border-4 border-t-[#f0f0fc] border-r-[#78788e] border-b-[#78788e] border-l-[#e6e6fa] bg-[#cfcfe6] text-lg leading-none whitespace-nowrap text-black disabled:text-[#9a9aa2] disabled:[text-shadow:1px_1px_0_#fff] ${className}`}
    >
      {children}
    </button>
  );
}

function Ball({ color }: { color: string }) {
  return <span className={`size-[18px] rounded-full ${color}`} />;
}

function FacesDialog() {
  return (
    <Dialog title="要移除的面" className="top-[338px] right-[486px] h-[292px] w-72">
      <ul className="mx-[15px] mt-[15px] h-[134px] border-2 border-[#9c9ca4] bg-white px-[5px] text-lg leading-[26px]">
        <li>凸台.2\面.3</li>
        <li>凸台.2\面.1</li>
        <li>凸台.1\面.4</li>
      </ul>
      <div className="mx-[17px] mt-[2px] flex gap-px">
        <BevelButton className="flex-1" disabled>
          移除
        </BevelButton>
        <BevelButton className="flex-1" disabled>
          替换
        </BevelButton>
      </div>
      <div className="mt-[17px] flex justify-end pr-3">
        <BevelButton className="w-[81px]">关闭</BevelButton>
      </div>
    </Dialog>
  );
}

function FieldRow({ id, label, value, picker, disabled }: { id: string; label: string; value: string; picker?: boolean; disabled?: boolean }) {
  return (
    <div className={`flex h-[31px] items-center text-lg ${disabled ? "text-[#8c8c8c]" : "text-black"}`}>
      <label htmlFor={id} className="w-[117px] shrink-0 whitespace-nowrap">
        {label}
      </label>
      <input
        id={id}
        defaultValue={value}
        disabled={disabled}
        className="h-full min-w-0 flex-1 border-2 border-[#9c9ca4] bg-white pl-[4px] outline-none"
      />
      {picker && (
        <button
          type="button"
          aria-label={`${label}选择`}
          className="mr-8 flex h-8 w-[33px] shrink-0 items-center justify-center border-t border-r-2 border-b-2 border-l border-t-white border-r-[#888] border-b-[#888] border-l-white bg-[#fbe9c8]"
        >
          <Icon name="bag" className="size-[24px]" />
        </button>
      )}
    </div>
  );
}

function TrimDialog() {
  return (
    <Dialog title="定义修剪" className="right-[25px] bottom-6 h-[273px] w-[446px]">
      <form className="pt-[18px]" onSubmit={(e) => e.preventDefault()}>
        <div className="flex flex-col gap-[7px] pr-[18px] pl-[15px]">
          <FieldRow id="trim" label="修剪:" value="几何体.2" />
          <FieldRow id="with" label="与:" value="零件几何体" disabled />
          <FieldRow id="remove" label="要移除的面:" value="3 元素" picker />
          <FieldRow id="keep" label="要保留的面:" value="无选择" picker />
        </div>
        <div className="mt-[19px] flex justify-end gap-[9px] pr-3">
          <BevelButton className="w-[83px] outline-2 -outline-offset-2 outline-[#777784]">
            <Ball color="bg-radial-[at_35%_30%] from-[#9cf09c] via-[#109a10] via-40% to-[#064a06]" />
            确定
          </BevelButton>
          <BevelButton className="w-[83px]">
            <Ball color="bg-radial-[at_35%_30%] from-[#ffb0a0] via-[#d82020] via-40% to-[#701010]" />
            取消
          </BevelButton>
          <BevelButton className="w-[83px]">预览</BevelButton>
        </div>
      </form>
    </Dialog>
  );
}

function PaletteTitle({ title }: { title: string }) {
  return (
    <div className="flex h-[45px] items-center border-b border-[#c4c4dc] bg-[#f3f3f3] pr-px pl-[13px] text-lg text-[#8c8c8c]">
      <h2 className="min-w-0 flex-1 whitespace-nowrap">{title}</h2>
      <button type="button" aria-label="关闭工具栏" className="relative mt-[6px] flex size-[30px] shrink-0 items-center justify-center bg-[#dadada]">
        <svg viewBox="0 0 10 10" className="size-[10px]" aria-hidden="true">
          <path d="M1 1l8 8M9 1L1 9" stroke="#fff" strokeWidth="2.500" />
        </svg>
      </button>
    </div>
  );
}

function FacePalette() {
  return (
    <section className="absolute top-[369px] right-[409px] h-[190px] w-[51px] overflow-hidden rounded-md bg-linear-to-r from-[#ececf8] via-[#cfcfe6] via-30% to-[#a8a8c0] shadow-xl ring-1 ring-[#55557a]">
      <PaletteTitle title="P" />
      <div className="-mt-[4px] -ml-px">
        <Grip vertical />
        <div className="-mt-[2px] w-[60px]">
          <ToolButton vertical tool={{ icon: "faceSelect", label: "选择面" }} />
          <ToolButton vertical tool={{ icon: "faceFlash", label: "移除面" }} />
          <ToolButton vertical tool={{ icon: "faceFind", label: "查找面" }} />
        </div>
      </div>
    </section>
  );
}

const dressUp: Tool[] = [
  { icon: "fillet", label: "倒圆角", arrow: true },
  { icon: "chamfer", label: "倒角" },
  { icon: "draft", label: "拔模", arrow: true },
  { icon: "shell", label: "盒体" },
  { icon: "thickness", label: "厚度" },
  { icon: "target", label: "内螺纹" },
  { icon: "removeFace", label: "移除面", arrow: true },
];

function DressUpPalette() {
  return (
    <section className="absolute top-[720px] right-[175px] h-[98px] w-[326px] overflow-hidden rounded-md bg-linear-to-b from-white via-[#cfcfe6] via-70% to-[#9c9cb2] shadow-xl ring-1 ring-[#55557a]">
      <PaletteTitle title="修饰特征" />
      <div className="-ml-[9px] flex pt-1">
        <Grip />
        <div className="flex pt-[5px]">
          {dressUp.map((t) => (
            <ToolButton key={t.icon} tool={t} />
          ))}
        </div>
      </div>
    </section>
  );
}

const sideGroups: Tool[][] = [
  [
    { icon: "treeDown", label: "更新树" },
    { icon: "treeRefresh", label: "刷新树" },
    { icon: "treeBox", label: "树对象" },
    { icon: "treeFilter", label: "过滤树" },
  ],
  [{ icon: "select", label: "选择", arrow: true }],
  [{ icon: "sketcher", label: "草图", arrow: true }],
  [
    { icon: "pad", label: "凸台", arrow: true },
    { icon: "pocket", label: "凹槽", arrow: true },
    { icon: "shaft", label: "旋转体" },
    { icon: "groove", label: "旋转槽" },
    { icon: "hole", label: "孔" },
    { icon: "rib", label: "肋" },
    { icon: "slotCut", label: "开槽" },
    { icon: "solidCombine", label: "实体混合", arrow: true },
    { icon: "loft", label: "多截面实体" },
    { icon: "removedLoft", label: "已移除的多截面实体" },
  ],
  [{ icon: "surface", label: "分割", arrow: true }],
  [
    { icon: "dimTable", label: "约束定义" },
    { icon: "dimBox", label: "约束" },
  ],
];

function SideToolbar() {
  return (
    <aside className="flex w-[113px] shrink-0 overflow-hidden border-l-2 border-white bg-linear-to-r from-white via-[#cfcfe6] via-25% to-[#cfcfe6] shadow-[inset_-8px_0_6px_-6px_#9a9aae]">
      <div className="w-[60px] shrink-0">
        <Grip vertical />
        <button type="button" aria-label="工作台" className="flex h-12 w-[54px] items-center justify-center pb-4">
          <Icon name="workbench" />
        </button>
        {sideGroups.map((group, i) => (
          <div key={i}>
            <Grip vertical />
            {group.map((t) => (
              <ToolButton key={t.icon} vertical tool={t} />
            ))}
          </div>
        ))}
      </div>
      <div className="flex w-[54px] shrink-0 flex-col pt-[384px]">
        <Grip vertical />
        <ToolButton vertical tool={{ icon: "point", label: "点" }} />
        <ToolButton vertical tool={{ icon: "line", label: "直线" }} />
        <ToolButton vertical tool={{ icon: "plane", label: "平面" }} />
        <div className="mt-4 flex flex-col">
          <Grip vertical />
          <ToolButton vertical tool={{ icon: "abc", label: "文本", arrow: true }} />
          <ToolButton vertical tool={{ icon: "flagNote", label: "标识注释", arrow: true }} />
          <ToolButton vertical tool={{ icon: "stamp", label: "三维标注" }} />
        </div>
        <div className="mt-9 flex flex-col">
          <Grip vertical />
          <ToolButton vertical tool={{ icon: "translate", label: "平移", arrow: true }} />
          <hr className="my-[5px] ml-[5px] border-t-2 border-white" />
          <ToolButton vertical tool={{ icon: "mirror", label: "镜像" }} />
          <ToolButton vertical tool={{ icon: "pattern", label: "阵列", arrow: true }} />
          <hr className="my-[5px] ml-[5px] border-t-2 border-white" />
          <ToolButton vertical tool={{ icon: "scale", label: "缩放", arrow: true }} />
        </div>
      </div>
    </aside>
  );
}

const bottomGroups: Tool[][] = [
  [
    { icon: "newFile", label: "新建" },
    { icon: "open", label: "打开" },
    { icon: "save", label: "保存" },
    { icon: "print", label: "打印" },
    { icon: "cut", label: "剪切" },
    { icon: "copy", label: "复制" },
    { icon: "paste", label: "粘贴" },
    { icon: "undo", label: "撤销", arrow: true },
    { icon: "redo", label: "重做", arrow: true },
    { icon: "help", label: "这是什么" },
  ],
  [
    { icon: "fx", label: "公式" },
    { icon: "bubble", label: "注释", tight: true },
    { icon: "chain", label: "链接", tight: true },
    { icon: "table", label: "设计表", arrow: true },
    { icon: "relations", label: "关系" },
    { icon: "lock", label: "锁定", arrow: true },
    { icon: "equation", label: "等效尺寸", tight: true },
  ],
  [
    { icon: "fly", label: "飞行模式" },
    { icon: "fit", label: "全部适应" },
    { icon: "pan", label: "平移视图" },
    { icon: "rotate", label: "旋转" },
    { icon: "zoomIn", label: "放大" },
    { icon: "zoomOut", label: "缩小" },
    { icon: "normal", label: "法线视图" },
    { icon: "multiView", label: "多视图" },
    { icon: "isoView", label: "等轴测视图", arrow: true },
    { icon: "shading", label: "着色", arrow: true },
    { icon: "hide", label: "隐藏/显示" },
    { icon: "swap", label: "交换可视空间" },
  ],
  [{ icon: "material", label: "应用材料" }],
  [
    { icon: "measure", label: "测量间距" },
    { icon: "caliper", label: "测量项" },
    { icon: "weight", label: "测量惯量" },
  ],
  [{ icon: "camera", label: "拍照" }],
  [
    { icon: "update", label: "全部更新" },
    { icon: "manualUpdate", label: "手动更新" },
    { icon: "axis", label: "轴系" },
    { icon: "decimals", label: "平均尺寸" },
    { icon: "catalog", label: "目录", arrow: true },
    { icon: "flash", label: "选择集" },
    { icon: "bodies", label: "几何体列表", arrow: true },
    { icon: "book", label: "图形集" },
  ],
];

function CatiaLogo() {
  return (
    <div className="flex w-[68px] shrink-0 flex-col pt-[2px]">
      <svg viewBox="0 0 40 34" className="h-[34px] w-10" aria-hidden="true">
        <path d="M14 2c9-2 13 1 11 4-2 2-5 4-9 4 3 1 3 3 0 5" fill="none" stroke="#e0202c" strokeWidth="3" />
        <path d="M6 17c12 0 13 3 9 8-2 4-7 6-13 7l7-12" fill="none" stroke="#4b3a94" strokeWidth="3" />
        <path d="M37 15c-6-2-12 0-11 4 1 3 8 3 7 7-1 4-8 5-14 4" fill="none" stroke="#f59c1a" strokeWidth="3.500" />
      </svg>
      <span className="pl-[10px] font-['Liberation_Sans',sans-serif] text-sm leading-[12px] font-bold text-[#4b3a94] italic">CATIA</span>
    </div>
  );
}

function BottomToolbar() {
  return (
    <footer className="flex h-[50px] shrink-0 items-start overflow-hidden bg-linear-to-b from-white via-[#cfcfe6] via-40% to-[#c0c0d6]">
      <div className="-ml-2 flex pt-[13px]">
        {bottomGroups.map((group, i) => (
          <div key={i} className="flex">
            <div className="-mt-[5px]">
              <Grip />
            </div>
            {group.map((t) => (
              <ToolButton key={t.icon} tool={t} />
            ))}
          </div>
        ))}
      </div>
      <div className="relative mt-[14px] h-9 w-[262px] shrink-0 bg-linear-to-r from-[#f4f4f4] to-[#e6e6e8]">
        <select aria-label="工作对象" className="h-full w-full appearance-none bg-transparent pl-[4px] text-lg outline-none">
          <option>零件几何体</option>
        </select>
        <Chevron />
      </div>
      <div className="flex pt-[13px]">
        <div className="-mt-[5px]">
          <Grip />
        </div>
        <ToolButton tool={{ icon: "extrudeAxis", label: "拔模方向" }} />
        <ToolButton tool={{ icon: "draftAnalysis", label: "拔模分析" }} />
        <ToolButton tool={{ icon: "tap", label: "螺纹分析" }} />
        <ToolButton tool={{ icon: "section", label: "截面" }} />
        <div className="-mt-[5px]">
          <Grip />
        </div>
      </div>
      <button type="button" aria-label="更多" className="flex-1 pl-1 text-left text-2xl leading-8 text-[#a0a0ae]">
        »
      </button>
      <CatiaLogo />
    </footer>
  );
}

export default function App() {
  return (
    <div className="flex h-screen flex-col overflow-hidden bg-[#cfcfe6] font-['Open_Sans','Noto_Sans_CJK_SC',sans-serif] text-black">
      <TitleBar />
      <MenuBar />
      <GraphicToolbar />
      <div className="flex min-h-0 flex-1">
        <main className="relative min-w-0 flex-1 overflow-hidden border-t-3 border-l-3 border-[#808080] bg-linear-to-b from-[#333366] via-[#474775] via-65% to-[#acacc4]">
          <div className="absolute -top-[3px] right-0 bottom-0 -left-[3px]">
            <Scene />
            <SpecTree />
            <FacesDialog />
            <FacePalette />
            <DressUpPalette />
            <TrimDialog />
          </div>
        </main>
        <SideToolbar />
      </div>
      <BottomToolbar />
    </div>
  );
}
